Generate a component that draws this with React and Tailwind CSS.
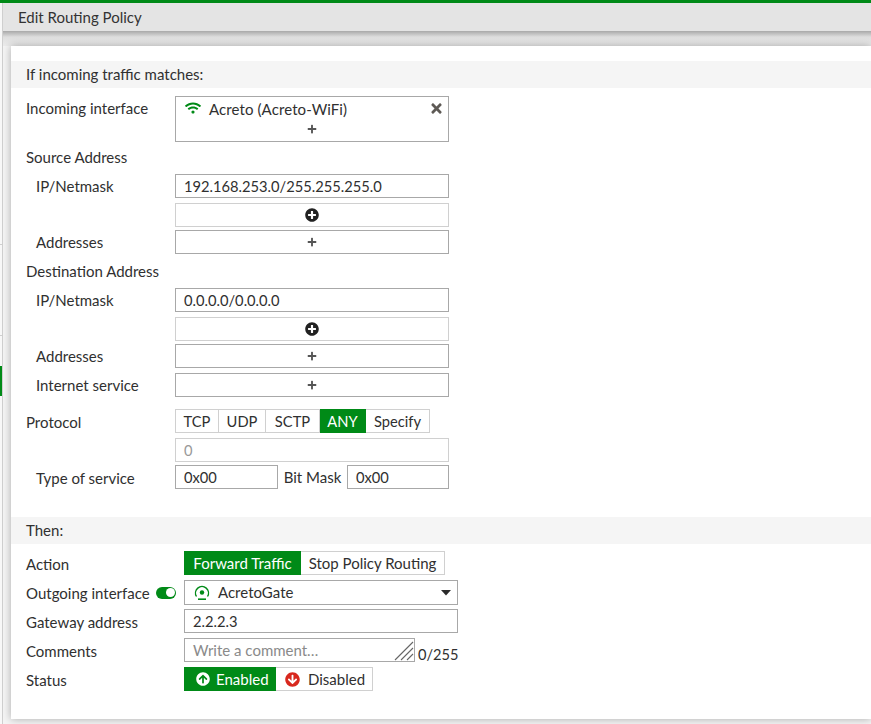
import React from "react";
import { FaWifi, FaPlus, FaPlusCircle, FaTimes, FaArrowCircleUp, FaArrowCircleDown } from "react-icons/fa";

const Field = ({ light, className = "", children }) => (
  <div className={`h-6 flex items-center border ${light ? "border-[#d0d0d0]" : "border-[#a8a8a8]"} ${className}`}>{children}</div>
);
const TextField = ({ value, className = "w-[274px]", muted }) => (
  <Field light={muted} className={`px-2 text-[14.7px] ${muted ? "text-[#999]" : ""} ${className}`}>{value}</Field>
);
const AddField = ({ light }) => (
  <Field light={light} className="w-[274px] justify-center">
    {light ? <FaPlusCircle className="text-[#222] text-[14px]" /> : <FaPlus className="text-[#555] text-[10px]" />}
  </Field>
);
const Row = ({ label, indent, className = "", labelClass = "w-[149px]", children }) => (
  <div className={`flex items-center ${className}`}>
    <div className={`${labelClass} ${indent ? "pl-[10px]" : ""} shrink-0`}>{label}</div>
    {children}
  </div>
);
const Tab = ({ on, children, className = "" }) => (
  <div className={`h-6 flex items-center justify-center whitespace-nowrap border-y border-r first:border-l ${on ? "bg-[#008a17] border-[#008a17] text-white" : "border-[#d0d0d0]"} ${className}`}>{children}</div>
);
const Section = ({ children }) => <div className="h-[27px] flex items-center pl-[15px] bg-[#f5f5f5]">{children}</div>;

export default function App() {
  return (
    <div className="w-[871px] h-[724px] overflow-hidden bg-[#f4f4f4] flex flex-col font-['Lato',sans-serif] text-[15px] text-[#303030] leading-none">
      <div className="h-[3px] shrink-0 bg-[#008a17]" />
      <div className="flex-1 flex min-h-0">
        <div className="w-[3px] shrink-0 bg-[#f8f8f8] border-r border-[#cfcfcf] flex flex-col">
          <div className="h-[242px] border-b border-[#cfcfcf]" />
          <div className="h-[91px] border-b border-[#cfcfcf]" />
          <div className="h-[30px]" />
          <div className="h-[30px] w-[2px] bg-[#008a17]" />
        </div>
        <div className="flex-1 flex flex-col min-w-0">
          <div className="h-[28px] shrink-0 bg-[#e4e4e4] flex items-center pl-[15px] text-[#333]">Edit Routing Policy</div>
          <div className="h-[15px] shrink-0 bg-gradient-to-b from-[#a9a9a9] via-[#dedede] via-40% to-[#ececec]" />
          <div className="ml-2 h-[673px] bg-white pt-[15px] shadow-[0_0_8px_rgba(0,0,0,0.3)]">
            <Section>If incoming traffic matches:</Section>
            <div className="pl-[15px]">
              <Row label={<span className="h-6 flex items-center">Incoming interface</span>} className="mt-2 !items-start">
                <div className="w-[274px] h-[46px] border border-[#a8a8a8] relative flex flex-col">
                  <div className="flex items-center pl-[9px] h-6">
                    <FaWifi className="text-[#008a17] text-[16px] mr-[8px] -translate-y-px" />
                    <span className="tracking-[0.1px]">Acreto (Acreto-WiFi)</span>
                  </div>
                  <div className="flex justify-center mt-[3px]"><FaPlus className="text-[#555] text-[10px]" /></div>
                  <FaTimes className="absolute right-[4px] top-[4px] text-[#5e5a55] text-[15px]" />
                </div>
              </Row>
              <div className="mt-[8px] h-[15px] flex items-center">Source Address</div>
              <Row label="IP/Netmask" indent className="mt-[9px]"><TextField value="192.168.253.0/255.255.255.0" /></Row>
              <Row label="" className="mt-[5px]"><AddField light /></Row>
              <Row label="Addresses" indent className="mt-[3px]"><AddField /></Row>
              <div className="mt-[9px] h-[16px] flex items-center">Destination Address</div>
              <Row label="IP/Netmask" indent className="mt-[9px]"><TextField value="0.0.0.0/0.0.0.0" /></Row>
              <Row label="" className="mt-[5px]"><AddField light /></Row>
              <Row label="Addresses" indent className="mt-[3px]"><AddField /></Row>
              <Row label="Internet service" indent className="mt-[5px]"><AddField /></Row>
              <Row label={<span className="block translate-y-px">Protocol</span>} className="mt-[12px]">
                <div className="flex text-[14.7px]">
                  <Tab className="w-[44px]">TCP</Tab>
                  <Tab className="w-[47px]">UDP</Tab>
                  <Tab className="w-[54px]">SCTP</Tab>
                  <Tab on className="w-[46px]">ANY</Tab>
                  <Tab className="w-[64px]">Specify</Tab>
                </div>
              </Row>
              <Row label="" className="mt-[5px]"><TextField value="0" muted /></Row>
              <Row label={<span className="block translate-y-px">Type of service</span>} indent className="mt-[3px]">
                <div className="w-[274px] flex items-center">
                  <TextField value="0x00" className="w-[103px] shrink-0" />
                  <span className="flex-1 text-center whitespace-nowrap">Bit Mask</span>
                  <TextField value="0x00" className="w-[102px] shrink-0" />
                </div>
              </Row>
            </div>
            <div className="mt-[28px]"><Section>Then:</Section></div>
            <div className="pl-[15px]">
              <Row label="Action" labelClass="w-[158px] translate-y-px" className="mt-[7px]">
                <div className="flex">
                  <Tab on className="w-[117px]">Forward Traffic</Tab>
                  <Tab className="w-[144px] border-l-0">Stop Policy Routing</Tab>
                </div>
              </Row>
              <Row label={
                <span className="flex items-center justify-between pr-2">
                  <span className="translate-y-px">Outgoing interface</span>
                  <span className="w-5 h-[12px] rounded-full bg-[#008a17] flex justify-end items-center pr-px"><span className="w-[9px] h-[9px] rounded-full bg-white" /></span>
                </span>
              } labelClass="w-[158px]" className="mt-[5px]">
                <div className="w-[274px] h-[25px] border border-[#a8a8a8] flex items-center pl-2 pr-[6px]">
                  <svg width="18" height="16" viewBox="0 0 18 16" className="mr-[7px]" fill="none">
                    <path d="M3.5 11.5 A6.5 6.5 0 1 1 14.5 11.5" stroke="#008a17" strokeWidth="1.4" />
                    <circle cx="9" cy="7.5" r="2.2" fill="#008a17" />
                    <rect x="5" y="13.4" width="8" height="1.6" fill="#008a17" />
                  </svg>
                  <span className="flex-1">AcretoGate</span>
                  <svg width="10" height="6" viewBox="0 0 10 6"><path d="M0 0 H10 L5 5.5 Z" fill="#2a2a2a" /></svg>
                </div>
              </Row>
              <Row label="Gateway address" labelClass="w-[158px] translate-y-px" className="mt-[4px]"><TextField value="2.2.2.3" /></Row>
              <Row label="Comments" labelClass="w-[158px] translate-y-px" className="mt-[5px]">
                <div className="w-[231px] h-6 border border-[#a8a8a8] relative flex items-center px-2 text-[#8a8a8a]">
                  Write a comment…
                  <svg width="20" height="20" viewBox="0 0 20 20" className="absolute right-0 bottom-0" stroke="#666" strokeWidth="1.1">
                    <path d="M1 19 L19 1 M7 19 L19 7 M13 19 L19 13" />
                  </svg>
                </div>
                <span className="ml-[3px] self-end -mb-px text-[14.6px]">0/255</span>
              </Row>
              <Row label="Status" labelClass="w-[158px] translate-y-px" className="mt-[5px]">
                <div className="flex">
                  <Tab on className="w-[92px] gap-[6px] !justify-start pl-[11px]"><FaArrowCircleUp className="text-white text-[14px]" />Enabled</Tab>
                  <Tab className="w-[97px] gap-[8px] !justify-start pl-[9px] border-l-0"><FaArrowCircleDown className="text-[#d8281e] text-[15px]" />Disabled</Tab>
                </div>
              </Row>
            </div>
          </div>
        </div>
      </div>
    </div>
  );
}
